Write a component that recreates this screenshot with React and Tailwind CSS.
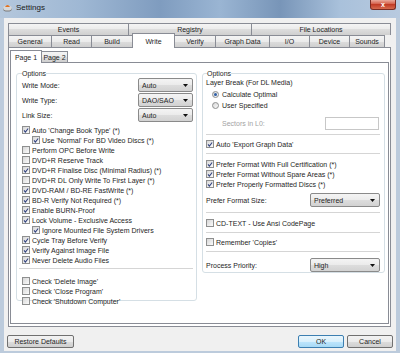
import React from "react";

const CB = ({ checked }) => (
  <span className="w-[8px] h-[8px] border border-[#8e8f8f] bg-[linear-gradient(135deg,#d6d6d6,#fbfbfb)] flex items-center justify-center shrink-0">
    {checked && (
      <svg width="7" height="7" viewBox="0 0 7 7">
        <path d="M1.2 3.4 L2.8 5.4 L6 1.2" stroke="#31427f" strokeWidth="1.3" fill="none" />
      </svg>
    )}
  </span>
);

const Row = ({ checked, label, indent }) => (
  <div className={"h-[10px] flex items-center gap-[2px] " + (indent ? "pl-[10px]" : "")}>
    <CB checked={checked} />
    <span className="whitespace-nowrap leading-none">{label}</span>
  </div>
);

const Radio = ({ on, label, cls }) => (
  <div className={"h-[10px] flex items-center gap-[3px] pl-[6px] " + (cls || "")}>
    <span className="w-[7px] h-[7px] rounded-full border border-[#8e8f8f] bg-[linear-gradient(135deg,#d6d6d6,#fbfbfb)] flex items-center justify-center shrink-0">
      {on && <span className="w-[3px] h-[3px] rounded-full bg-[#2f5fa6]" />}
    </span>
    <span className="whitespace-nowrap leading-none">{label}</span>
  </div>
);

const Combo = ({ value, w }) => (
  <div
    className={
      "h-[14px] flex items-center justify-between pl-[3px] pr-[4px] border border-[#8a8a8a] rounded-[2px] bg-[linear-gradient(#f4f4f4,#ebebeb_50%,#dddddd_50%,#d2d2d2)] " +
      w
    }
  >
    <span className="leading-none">{value}</span>
    <svg width="5" height="3" viewBox="0 0 5 3">
      <path d="M0 0 L5 0 L2.5 3 Z" fill="#111" />
    </svg>
  </div>
);

const Sep = ({ cls }) => <div className={"border-t border-[#d5d5d5] " + cls} />;

const tabBg = "bg-[linear-gradient(#f4f4f4,#ebebeb_50%,#dddddd_50%,#cfcfcf)]";

const Tab = ({ label, w }) => (
  <div className={"h-full flex items-center justify-center border border-b-0 border-[#898c95] -ml-px first:ml-0 " + tabBg + " " + w}>
    <span className="leading-none">{label}</span>
  </div>
);

export default function App() {
  return (
    <div className="w-[400px] h-[353px] overflow-hidden flex flex-col bg-[#bccbdc] font-['Liberation_Sans',sans-serif] text-[7px] text-[#1e1e1e]">
      {/* Title bar */}
      <div className="h-[18px] flex items-start shrink-0 bg-[linear-gradient(90deg,#b4c7dc_0%,#9fb8d4_20%,#7f9cbf_40%,#9ab5d3_55%,#7895b8_70%,#a9c1db_85%,#b8cadf_100%)]">
        <div className="flex items-center h-[15px] pl-[3px] gap-[4px]">
          <svg width="9" height="9" viewBox="0 0 9 9">
            <ellipse cx="4.5" cy="6" rx="4.3" ry="2.6" fill="#7a7a7a" />
            <ellipse cx="4.5" cy="5" rx="4.3" ry="2.6" fill="#d8d8d8" />
            <path d="M2 4 Q4.5 0 7 4 Z" fill="#e0701f" />
          </svg>
          <span className="text-[8px] leading-none text-[#1a1a1a]">Settings</span>
        </div>
        <div className="ml-auto mr-[4px] w-[26px] h-[10px] rounded-b-[3px] border border-t-0 border-[#7a2b22] bg-[linear-gradient(#e9a99b,#d2553f_50%,#c13b25_50%,#d66a4e)] flex items-center justify-center">
          <span className="text-[7px] leading-none text-white font-bold">x</span>
        </div>
      </div>

      {/* Client area */}
      <div className="mx-[4px] h-[333px] bg-[#f0f0f0] flex flex-col shrink-0">
        <div className="ml-[4px] mt-[5px] w-[383px] flex flex-col">
          {/* tab row 1 */}
          <div className="h-[12px] flex">
            <Tab label="Events" w="w-[121px]" />
            <Tab label="Registry" w="w-[124px]" />
            <Tab label="File Locations" w="w-[140px]" />
          </div>
          {/* tab row 2 */}
          <div className="h-[12px] flex items-end">
            <Tab label="General" w="w-[44px]" />
            <Tab label="Read" w="w-[41px]" />
            <Tab label="Build" w="w-[42px]" />
            <div className="relative z-10 -ml-px h-[15px] -mb-px w-[43px] flex items-center justify-center border border-b-0 border-[#898c95] bg-white">
              <span className="leading-none">Write</span>
            </div>
            <Tab label="Verify" w="w-[42px]" />
            <Tab label="Graph Data" w="w-[55px]" />
            <Tab label="I/O" w="w-[41px]" />
            <Tab label="Device" w="w-[41px]" />
            <Tab label="Sounds" w="w-[36px]" />
          </div>

          {/* outer panel */}
          <div className="h-[280px] border border-[#898c95] bg-white pt-[1px] px-[1px] flex flex-col">
            {/* page tabs */}
            <div className="h-[13px] flex items-end">
              <div className="relative z-10 h-[13px] -mb-px w-[32px] flex items-center justify-center border border-b-0 border-[#898c95] bg-white">
                <span className="leading-none">Page 1</span>
              </div>
              <div className={"h-[11px] -ml-px w-[27px] flex items-center justify-center border border-b-0 border-[#898c95] " + tabBg}>
                <span className="leading-none">Page 2</span>
              </div>
            </div>
            {/* inner panel */}
            <div className="h-[262px] border border-[#898c95] bg-white flex gap-[5px] pl-[5px] pt-[7px]">
              {/* Left group */}
              <fieldset className="w-[181px] h-[231px] border border-[#d5dfe5] rounded-[3px] pl-[5px] pr-[3px] flex flex-col">
                <legend className="px-0 leading-none text-[7px]">Options</legend>
                <div className="mt-[1px] flex flex-col gap-[1px]">
                  <div className="flex items-center justify-between">
                    <span className="leading-none">Write Mode:</span>
                    <Combo value="Auto" w="w-[55px]" />
                  </div>
                  <div className="flex items-center justify-between">
                    <span className="leading-none">Write Type:</span>
                    <Combo value="DAO/SAO" w="w-[55px]" />
                  </div>
                  <div className="flex items-center justify-between">
                    <span className="leading-none">Link Size:</span>
                    <Combo value="Auto" w="w-[55px]" />
                  </div>
                </div>
                <div className="mt-[3px] flex flex-col">
                  <Row checked label="Auto 'Change Book Type' (*)" />
                  <Row checked indent label="Use 'Normal' For BD Video Discs (*)" />
                  <Row label="Perform OPC Before Write" />
                  <Row label="DVD+R Reserve Track" />
                  <Row checked label="DVD+R Finalise Disc (Minimal Radius) (*)" />
                  <Row label="DVD+R DL Only Write To First Layer (*)" />
                  <Row checked label="DVD-RAM / BD-RE FastWrite (*)" />
                  <Row checked label="BD-R Verify Not Required (*)" />
                  <Row checked label="Enable BURN-Proof" />
                  <Row checked label="Lock Volume - Exclusive Access" />
                  <Row checked indent label="Ignore Mounted File System Drivers" />
                  <Row checked label="Cycle Tray Before Verify" />
                  <Row checked label="Verify Against Image File" />
                  <Row checked label="Never Delete Audio Files" />
                </div>
                <Sep cls="mt-[3px] -ml-[3px]" />
                <div className="mt-[7px] flex flex-col">
                  <Row label="Check 'Delete Image'" />
                  <Row label="Check 'Close Program'" />
                  <Row label="Check 'Shutdown Computer'" />
                </div>
              </fieldset>

              {/* Right group */}
              <fieldset className="w-[183px] h-[203px] border border-[#d5dfe5] rounded-[3px] pl-[3px] pr-[4px] flex flex-col">
                <legend className="ml-[1px] px-0 leading-none text-[7px]">Options</legend>
                <div className="h-[10px] flex items-center">
                  <span className="leading-none">Layer Break (For DL Media)</span>
                </div>
                <Radio on label="Calculate Optimal" cls="mt-[2px]" />
                <Radio label="User Specified" cls="mt-[1px]" />
                <div className="mt-[7px] h-[13px] flex items-center justify-between pl-[16px] pr-[1px]">
                  <span className="leading-none text-[#a3a3a3]">Sectors in L0:</span>
                  <div className="w-[54px] h-[13px] border border-[#c7c7c7] bg-white" />
                </div>
                <Sep cls="mt-[4px]" />
                <div className="mt-[4px] flex flex-col">
                  <Row checked label="Auto 'Export Graph Data'" />
                </div>
                <Sep cls="mt-[4px]" />
                <div className="mt-[5px] flex flex-col">
                  <Row checked label="Prefer Format With Full Certification (*)" />
                  <Row checked label="Prefer Format Without Spare Areas (*)" />
                  <Row checked label="Prefer Properly Formatted Discs (*)" />
                </div>
                <div className="mt-[4px] flex items-center justify-between">
                  <span className="leading-none">Prefer Format Size:</span>
                  <Combo value="Preferred" w="w-[70px]" />
                </div>
                <Sep cls="mt-[5px]" />
                <div className="mt-[5px] flex flex-col">
                  <Row label="CD-TEXT - Use Ansi CodePage" />
                </div>
                <Sep cls="mt-[4px]" />
                <div className="mt-[4px] flex flex-col">
                  <Row label="Remember 'Copies'" />
                </div>
                <Sep cls="mt-[4px]" />
                <div className="mt-[6px] flex items-center justify-between">
                  <span className="leading-none">Process Priority:</span>
                  <Combo value="High" w="w-[70px]" />
                </div>
              </fieldset>
            </div>
          </div>
        </div>

        {/* Buttons */}
        <div className="mt-[8px] px-[3px] flex items-center">
          <div className="w-[67px] h-[13px] rounded-[2px] border border-[#707070] bg-[linear-gradient(#f2f2f2,#ebebeb_50%,#dddddd_50%,#cfcfcf)] flex items-center justify-center">
            <span className="leading-none">Restore Defaults</span>
          </div>
          <div className="ml-auto w-[46px] h-[13px] rounded-[2px] border border-[#3c7fb1] bg-[linear-gradient(#eaf6fd,#d9f0fc_50%,#bee6fd_50%,#a7d9f5)] flex items-center justify-center">
            <span className="leading-none">OK</span>
          </div>
          <div className="ml-[3px] w-[46px] h-[13px] rounded-[2px] border border-[#707070] bg-[linear-gradient(#f2f2f2,#ebebeb_50%,#dddddd_50%,#cfcfcf)] flex items-center justify-center">
            <span className="leading-none">Cancel</span>
          </div>
        </div>
      </div>
    </div>
  );
}
